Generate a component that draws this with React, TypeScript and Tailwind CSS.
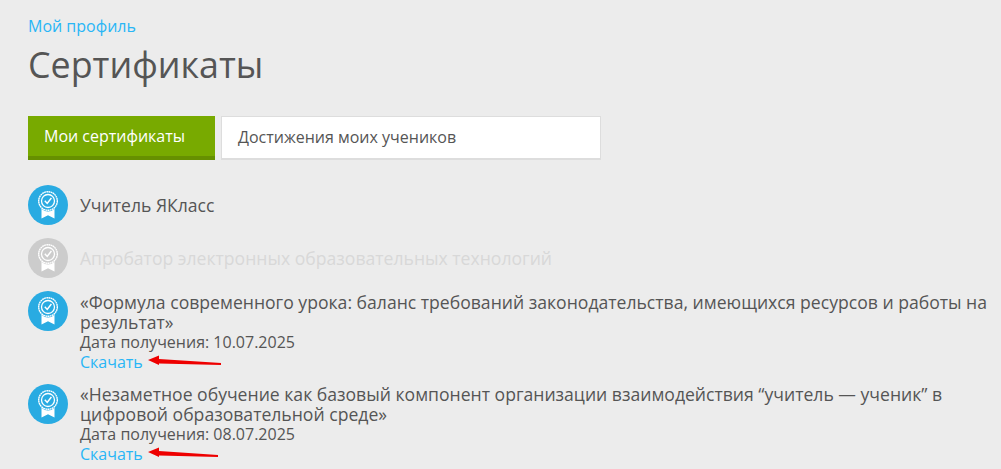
const Badge = ({ muted }: { muted?: boolean }) => {
  const bg = muted ? "#cccccc" : "#29abe2";
  return (
    <div className={`w-10 h-10 rounded-full shrink-0 flex items-center justify-center ${muted ? "bg-[#cccccc]" : "bg-[#29abe2]"}`}>
      <svg width="40" height="40" viewBox="0 0 40 40" fill="none">
        <path d="M13.5 23 L13.5 33.5 L20 30.3 L26.5 33.5 L26.5 23 Z" fill="#fff" />
        <circle cx="20" cy="16" r="10.4" fill={bg} />
        <circle cx="20" cy="16" r="9.3" stroke="#fff" strokeWidth="1.4" strokeDasharray="1.8 0.4" />
        <circle cx="20" cy="16" r="6.5" stroke="#fff" strokeWidth="1.3" />
        <path d="M16.8 15.8 L19.2 18.4 L23.4 13" stroke="#fff" strokeWidth="1.5" />
      </svg>
    </div>
  );
};

const Arrow = ({ w, drop }: { w: number; drop: number }) => (
  <svg className="absolute left-[66px] top-[2px]" width={w + 6} height="18" viewBox={`0 0 ${w + 6} 18`}>
    <path d={`M2 6 L13 1.5 L13 5 L${w} ${6 + drop} L${w} ${8 + drop} L13 9.5 L13 11 Z`} fill="#ee0000" />
  </svg>
);

const Cert = ({ title, date, w, drop, first }: { title: string; date: string; w: number; drop: number; first?: boolean }) => (
  <div className="flex gap-3 items-start">
    <Badge />
    <div className="flex-1 text-[#555555]">
      <div className={first ? "text-[17.6px] leading-[20px] pt-[1px]" : "text-[17.6px] leading-[20px]"}>{title}</div>
      <div className="text-[16px] leading-[20px]">Дата получения: {date}</div>
      <div className="relative w-fit text-[16px] leading-[20px]">
        <a className="text-[#29b6f6]">Скачать</a>
        <Arrow w={w} drop={drop} />
      </div>
    </div>
  </div>
);

export default function App() {
  return (
    <div className="h-[469px] w-[1001px] overflow-hidden bg-[#ececec] pl-7 pr-2 pt-[16px]" style={{ fontFamily: '"Open Sans", sans-serif' }}>
      <a className="block text-[16px] leading-[20px] text-[#29b6f6]">Мой профиль</a>
      <h1 className="mt-[5px] text-[35.8px] leading-[46px] text-[#555555]">Сертификаты</h1>
      <div className="mt-[29px] flex gap-[6px] text-[16px]">
        <div className="w-[187px] h-[44px] bg-[#78aa00] border-b-4 border-[#669000] text-white pl-4 leading-[40px]">Мои сертификаты</div>
        <div className="w-[380px] h-[44px] bg-white border border-[#dddddd] border-b-2 text-[#555555] pl-4 leading-[41px]">Достижения моих учеников</div>
      </div>
      <div className="mt-[25px] flex gap-3 items-center h-10 text-[17.6px] text-[#555555]"><Badge />Учитель ЯКласс</div>
      <div className="mt-[13px] flex gap-3 items-center h-10 text-[17.6px] text-[#d8d8d8]"><Badge muted />Апробатор электронных образовательных технологий</div>
      <div className="mt-[13px]">
        <Cert first w={75} drop={3} date="10.07.2025" title="«Формула современного урока: баланс требований законодательства, имеющихся ресурсов и работы на результат»" />
      </div>
      <div className="mt-[12px]">
        <Cert w={72} drop={3} date="08.07.2025" title="«Незаметное обучение как базовый компонент организации взаимодействия “учитель — ученик” в цифровой образовательной среде»" />
      </div>
    </div>
  );
}
